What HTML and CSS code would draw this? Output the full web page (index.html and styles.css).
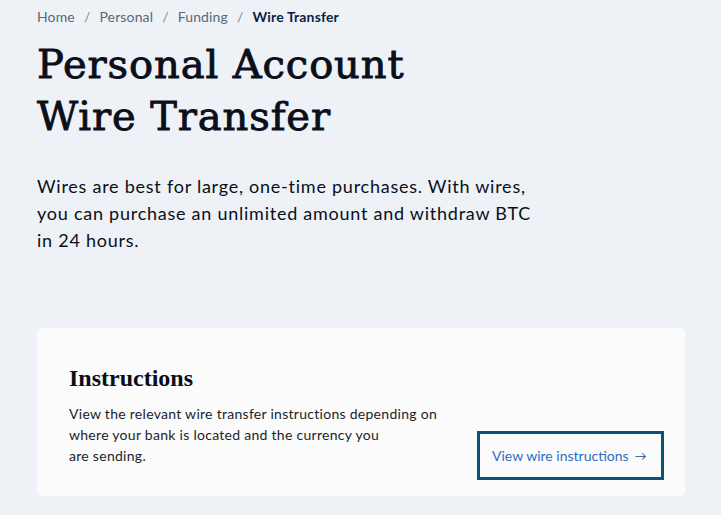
FILE: index.html
```html
<!DOCTYPE html>
<html>
<head>
<meta charset="utf-8">
<link rel="stylesheet" href="styles.css">
</head>
<body>
<main class="page">
  <nav class="crumbs">
    <a class="crumb">Home</a><span class="sep">/</span><a class="crumb">Personal</a><span class="sep">/</span><a class="crumb">Funding</a><span class="sep">/</span><span class="crumb current">Wire Transfer</span>
  </nav>
  <h1 class="title">Personal Account<br>Wire Transfer</h1>
  <p class="lead">Wires are best for large, one-time purchases. With wires, you can purchase an unlimited amount and withdraw BTC in 24 hours.</p>
  <section class="card">
    <div class="card-text">
      <h2 class="card-title">Instructions</h2>
      <p class="card-body">View the relevant wire transfer instructions depending on where your bank is located and the currency you<br>are sending.</p>
    </div>
    <a class="btn">View wire instructions <span class="arrow">→</span></a>
  </section>
</main>
</body>
</html>
```
FILE: styles.css
```css
html, body {
  margin: 0;
  padding: 0;
  background: #eef2f6;
}
body {
  font-family: "Lato", "Liberation Sans", sans-serif;
  color: #0a0f1a;
}
.page {
  padding: 7px 36px 0 37px;
}
.crumbs {
  font-size: 14px;
  line-height: 20px;
  color: #56687c;
  display: flex;
  align-items: center;
  letter-spacing: 0.15px;
}
.sep {
  margin: 0 9px;
  color: #7b8a9a;
}
.crumb.current {
  font-weight: 700;
  color: #0b1f44;
}
.title {
  font-family: "DejaVu Serif", serif;
  font-weight: 400;
  font-size: 40px;
  letter-spacing: 0.9px;
  line-height: 52px;
  -webkit-text-stroke: 0.9px #0a0f1a;
  margin: 11px 0 0;
  color: #0a0f1a;
}
.lead {
  font-size: 18px;
  letter-spacing: 0.75px;
  line-height: 27px;
  margin: 31px 0 0;
  max-width: 505px;
  color: #0a0f1a;
}
.card {
  margin-top: 74px;
  background: #fbfbfc;
  border-radius: 5px;
  width: 648px;
  box-sizing: border-box;
  padding: 36px 21px 16px 32px;
  display: flex;
  justify-content: space-between;
  align-items: flex-end;
}
.card-title {
  font-family: "Liberation Serif", serif;
  font-weight: 700;
  font-size: 24px;
  line-height: 28px;
  margin: 0;
}
.card-body {
  font-size: 14px;
  letter-spacing: 0.28px;
  line-height: 21px;
  margin: 11px 0 14px;
  max-width: 380px;
  color: #1a1f28;
}
.btn {
  box-sizing: border-box;
  width: 187px;
  height: 49px;
  border: 3px solid #0c5274;
  display: flex;
  align-items: center;
  padding-left: 12px;
  font-size: 14px;
  color: #2a6fc4;
}
.arrow {
  margin-left: 6px;
  font-size: 12px;
  color: #1e4f8c;
}
```
